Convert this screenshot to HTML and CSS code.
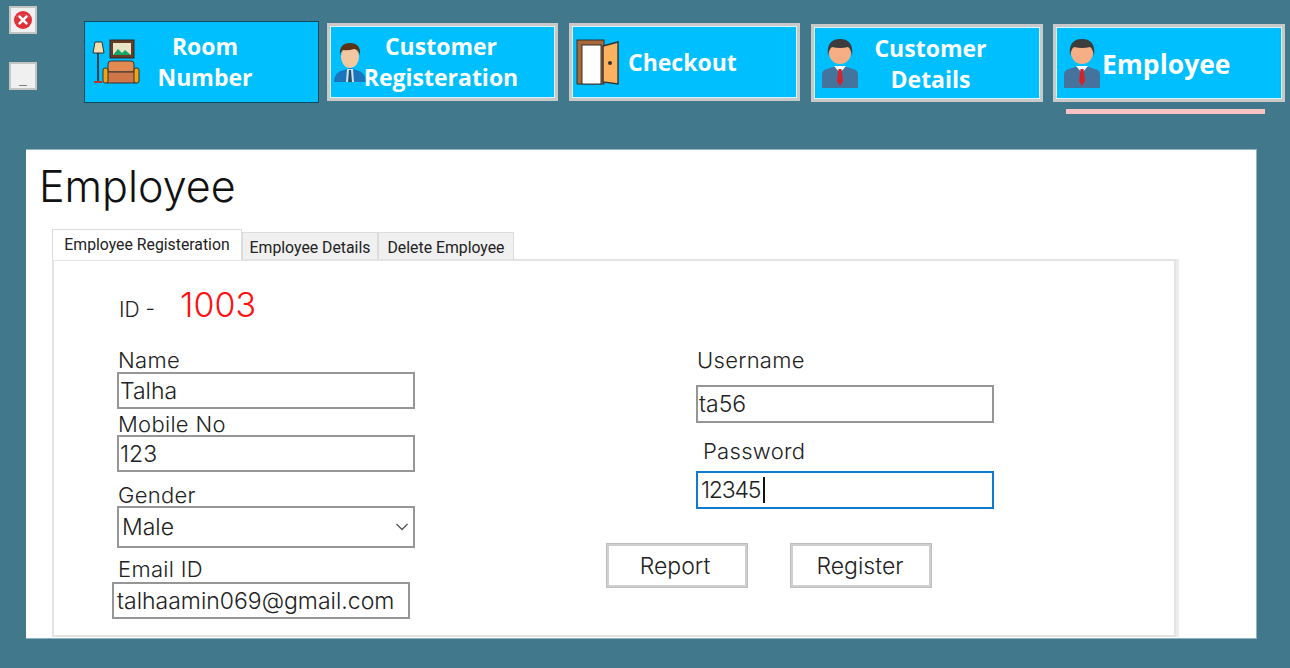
FILE: index.html
```html
<!DOCTYPE html>
<html>
  <head>
    <title>Employee</title>
    <link rel="stylesheet" href="styles.css">
  </head>
  <body>
    <header class="topbar">
      <div class="window-btns">
        <button class="win-btn" type="button">
          <svg width="20" height="20" viewBox="0 0 20 20">
            <circle cx="10" cy="10" r="9" fill="#e0303a"/>
            <path d="M3 8a7.5 6 0 0 1 14 0a7 4 0 0 0-14 0z" fill="#f58a8e"/>
            <path d="M6.6 6.6l6.8 6.8M13.4 6.6l-6.8 6.8" stroke="#fff" stroke-width="2.6" stroke-linecap="round"/>
          </svg>
        </button>
        <button class="win-btn win-min" type="button">_</button>
      </div>
      <nav class="nav">
        <a class="nav-btn nav-room">
          <svg class="nav-icon" width="50" height="46" viewBox="0 0 50 46">
            <rect x="18" y="1" width="24" height="18" fill="#6b3a24" stroke="#2c2c2c"/>
            <rect x="21" y="4" width="18" height="12" fill="#e8e4c8"/>
            <path d="M21 16l5-6 4 4 3-3 6 5z" fill="#18a66a"/>
            <path d="M3 3h7l2 11H1z" fill="#f4dfb0" stroke="#333"/>
            <path d="M6 14v29" stroke="#222" stroke-width="1.6"/>
            <path d="M2 43h8" stroke="#b5382c" stroke-width="2"/>
            <path d="M16 33v-8q0-3 3-3h20q3 0 3 3v8z" fill="#e28a52" stroke="#333"/>
            <rect x="15" y="33" width="28" height="11" fill="#d0774a" stroke="#333"/>
            <rect x="11" y="29" width="5" height="15" rx="2" fill="#f2a30f" stroke="#333"/>
            <rect x="42" y="29" width="5" height="15" rx="2" fill="#f2a30f" stroke="#333"/>
          </svg>
          <span class="nav-text">Room<br>Number</span>
        </a>
        <a class="nav-btn nav-reg">
          <svg class="nav-icon" width="34" height="44" viewBox="0 0 34 44">
            <path d="M1 42q0-10 10-12l6-2 6 2q10 2 10 12z" fill="#1b75bb"/>
            <path d="M14 29h6l1 13h-8z" fill="#cfe3ee"/>
            <path d="M16 30h2l1 12h-4z" fill="#20506f"/>
            <ellipse cx="17" cy="17" rx="9" ry="11" fill="#f3c7a0"/>
            <path d="M7 15q-1-12 10-12t10 12q-2-6-6-6-6 2-11 1-2 1-3 5z" fill="#5a3216"/>
          </svg>
          <span class="nav-text">Customer<br>Registeration</span>
        </a>
        <a class="nav-btn nav-checkout">
          <svg class="nav-icon" width="44" height="48" viewBox="0 0 44 48">
            <rect x="1" y="2" width="27" height="44" fill="#a8683a" stroke="#333"/>
            <rect x="6" y="7" width="19" height="39" fill="#fff" stroke="#333"/>
            <path d="M27 8l15-4v42l-15-2z" fill="#fdb35e" stroke="#333" stroke-width="1.4"/>
            <circle cx="34" cy="25" r="2" fill="#333"/>
          </svg>
          <span class="nav-text">Checkout</span>
        </a>
        <a class="nav-btn nav-details">
          <svg class="nav-icon" width="38" height="50" viewBox="0 0 38 50">
            <path d="M1 50V37q0-5 5-6l9-3h8l9 3q5 1 5 6v13z" fill="#44739e"/>
            <path d="M13 28h12l-6 7z" fill="#fff"/>
            <path d="M17.500 31h3l1.500 12-3 5-3-5z" fill="#d2232a"/>
            <circle cx="19" cy="15" r="11" fill="#f7ae84"/>
            <path d="M7 18Q5 1 19 1t12 17q-1-7-4-9-8 2-16 0-3 2-4 9z" fill="#3c3c3c"/>
          </svg>
          <span class="nav-text">Customer<br>Details</span>
        </a>
        <div class="nav-item">
          <a class="nav-btn nav-emp">
            <svg class="nav-icon" width="38" height="50" viewBox="0 0 38 50">
              <path d="M1 50V37q0-5 5-6l9-3h8l9 3q5 1 5 6v13z" fill="#44739e"/>
              <path d="M13 28h12l-6 7z" fill="#fff"/>
              <path d="M17.500 31h3l1.500 12-3 5-3-5z" fill="#d2232a"/>
              <circle cx="19" cy="15" r="11" fill="#f7ae84"/>
              <path d="M7 18Q5 1 19 1t12 17q-1-7-4-9-8 2-16 0-3 2-4 9z" fill="#3c3c3c"/>
            </svg>
            <span class="nav-text">Employee</span>
          </a>
          <div class="nav-underline"></div>
        </div>
      </nav>
    </header>

    <main class="panel">
      <h1 class="title">Employee</h1>
      <div class="tabs">
        <div class="tab tab-active">Employee Registeration</div>
        <div class="tab">Employee Details</div>
        <div class="tab">Delete Employee</div>
      </div>
      <section class="tab-body">
        <div class="id-row">
          <span class="id-label">ID -</span>
          <span class="id-value">1003</span>
        </div>
        <div class="columns">
          <div class="col-left">
            <label class="lbl lbl-name">Name</label>
            <div class="field">Talha</div>
            <label class="lbl lbl-mobile">Mobile No</label>
            <div class="field">123</div>
            <label class="lbl lbl-gender">Gender</label>
            <div class="field field-select">
              Male
              <svg width="14" height="8" viewBox="0 0 14 8"><path d="M1.500 1l5.500 5.500L12.500 1" fill="none" stroke="#555" stroke-width="1.300"/></svg>
            </div>
            <label class="lbl lbl-email">Email ID</label>
            <div class="field field-email">talhaamin069@gmail.com</div>
          </div>
          <div class="col-right">
            <label class="lbl lbl-user">Username</label>
            <div class="field field-tall">ta56</div>
            <label class="lbl lbl-pass">Password</label>
            <div class="field field-tall field-focus">12345<span class="caret"></span></div>
            <div class="actions">
              <button class="action-btn btn-report" type="button">Report</button>
              <button class="action-btn" type="button">Register</button>
            </div>
          </div>
        </div>
      </section>
    </main>
  </body>
</html>
```

FILE: styles.css
```css
* {
  box-sizing: border-box;
}

html,
body {
  margin: 0;
  height: 668px;
  overflow: hidden;
}

body {
  background-color: #41788c;
  font-family: Inter, "Liberation Sans", sans-serif;
  font-weight: 300;
  color: #222;
}

.topbar {
  display: flex;
  height: 149px;
  padding: 6px 5px 0 9px;
}

.window-btns {
  display: flex;
  flex-direction: column;
  gap: 28px;
  width: 28px;
}

.win-btn {
  width: 28px;
  height: 28px;
  padding: 0;
  display: flex;
  align-items: center;
  justify-content: center;
  background-color: #f0f0f0;
  border: 2px solid #c4c4c4;
  font-family: "Liberation Sans", sans-serif;
  font-size: 14px;
  color: #222;
}

.win-min {
  padding-top: 5px;
  font-weight: bold;
}

.nav {
  display: flex;
  align-items: flex-start;
  margin-left: 47px;
  margin-top: 15px;
}

.nav-btn {
  display: flex;
  align-items: center;
  height: 78px;
  background-color: #00bfff;
  border: 3px solid #c9c9c9;
  box-shadow: inset 0 0 0 1px #d8f4ff;
  font-family: "Open Sans", sans-serif;
  font-weight: 700;
  font-size: 23px;
  line-height: 31px;
  color: #fff;
}

.nav-icon {
  flex: none;
}

.nav-text {
  flex: 1;
  text-align: center;
  white-space: nowrap;
}

.nav-room {
  width: 235px;
  height: 82px;
  margin-right: 8px;
  padding: 0 0 0 7px;
  border: 1px solid #0a4a63;
  box-shadow: none;
}

.nav-room .nav-text {
  padding-right: 50px;
}

.nav-reg {
  width: 231px;
  margin-top: 2px;
  margin-right: 11px;
  padding-left: 3px;
}

.nav-reg .nav-text {
  margin-left: -18px;
  padding-right: 22px;
}

.nav-checkout {
  width: 231px;
  margin-top: 2px;
  margin-right: 11px;
  padding-left: 4px;
}

.nav-checkout .nav-text {
  flex: none;
  margin-left: 8px;
}

.nav-details {
  width: 232px;
  margin-top: 3px;
  margin-right: 10px;
  padding-left: 7px;
}

.nav-details .nav-text {
  padding-top: 2px;
  padding-right: 38px;
}

.nav-item {
  width: 232px;
  margin-top: 3px;
}

.nav-emp {
  padding-left: 7px;
  font-size: 26.500px;
}

.nav-emp .nav-text {
  flex: none;
  margin-left: 1px;
  padding-top: 3px;
}

.nav-underline {
  width: 199px;
  height: 5px;
  margin: 7px 0 0 13px;
  background-color: #f8c4c4;
}

.panel {
  width: 1231px;
  height: 490px;
  margin-left: 26px;
  padding: 12px 0 0 13px;
  background-color: #fff;
  border-top: 1px solid #8fb3c0;
  border-right: 1px solid #8fb3c0;
  border-bottom: 1px solid #8fb3c0;
}

.title {
  margin: 0;
  height: 66px;
  font-weight: 300;
  font-size: 43px;
  line-height: 48px;
  color: #111;
}

.tabs {
  display: flex;
  align-items: flex-end;
  margin-left: 13px;
  height: 31px;
}

.tab {
  height: 27px;
  padding: 5px 0 0;
  width: 136px;
  text-align: center;
  background-color: #f0f0f0;
  border: 1px solid #dcdcdc;
  border-bottom: none;
  font-family: Roboto, "Liberation Sans", sans-serif;
  font-weight: 400;
  font-size: 15.800px;
  color: #222;
}

.tab-active {
  position: relative;
  z-index: 1;
  width: 190px;
  height: 31px;
  margin-bottom: -1px;
  padding-top: 5px;
  background-color: #fff;
}

.tab-body {
  width: 1124px;
  height: 378px;
  margin-left: 13px;
  background-color: #fff;
  border: 2px solid #e3e3e3;
  box-shadow: 3px 0 0 #ececec;
}

.id-row {
  display: flex;
  align-items: baseline;
  height: 84px;
  padding: 24px 0 0 65px;
}

.id-label {
  width: 61px;
  font-size: 21px;
}

.id-value {
  font-size: 34px;
  line-height: 40px;
  color: #ff1010;
}

.columns {
  display: flex;
}

.col-left {
  width: 642px;
  padding-left: 63px;
  margin-top: 4px;
}

.col-right {
  margin-top: 2px;
}

.lbl {
  display: block;
  height: 22px;
  padding-left: 1px;
  font-size: 22px;
  line-height: 22px;
  letter-spacing: 0.3px;
  color: #222;
}

.lbl-name {
  height: 23px;
}

.field {
  display: flex;
  align-items: center;
  width: 298px;
  height: 37px;
  padding: 0 1px;
  background-color: #fff;
  border: 2px solid #969696;
  font-size: 23px;
  color: #222;
}

.lbl-mobile {
  height: 26px;
  padding-top: 4px;
}

.lbl-gender {
  height: 34px;
  padding-top: 12px;
}

.field-select {
  height: 42px;
  justify-content: space-between;
  padding: 0 4px 0 3px;
}

.lbl-email {
  height: 34px;
  padding-top: 10px;
}

.field-email {
  margin-left: -5px;
  padding-left: 3px;
}

.field-tall {
  height: 38px;
}

.lbl-user {
  height: 38px;
  padding-top: 2px;
}

.lbl-pass {
  height: 48px;
  padding: 17px 0 0 7px;
}

.field-focus {
  border-color: #0f7bd0;
  padding-left: 3px;
  letter-spacing: -1.200px;
}

.caret {
  width: 2px;
  height: 26px;
  margin-left: 3px;
  background-color: #111;
}

.actions {
  display: flex;
  gap: 42px;
  margin: 34px 0 0 -90px;
}

.action-btn {
  width: 142px;
  height: 45px;
  padding: 0 2px 0 0;
  background-color: #fff;
  border: 3px solid #cfcfcf;
  outline: 1px solid #bdbdbd;
  outline-offset: -1px;
  font-family: Inter, sans-serif;
  font-weight: 300;
  font-size: 23px;
  color: #222;
}

.btn-report {
  padding-right: 4px;
}
```
